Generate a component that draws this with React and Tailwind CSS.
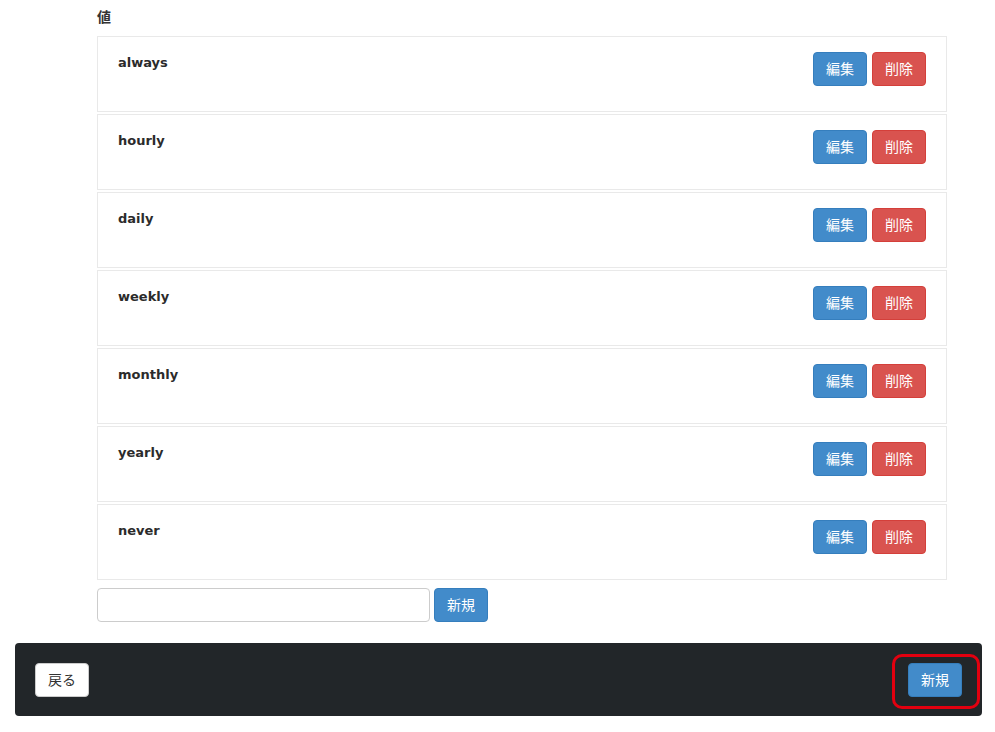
import React from "react";

const items = ["always", "hourly", "daily", "weekly", "monthly", "yearly", "never"];

const jp = { fontFamily: '"Noto Sans CJK JP", "Noto Sans", sans-serif' };

function Btn({ color, children }) {
  const cls =
    color === "blue"
      ? "bg-[#428bca] border-[#357ebd] text-white"
      : color === "red"
      ? "bg-[#d9534f] border-[#d43f3a] text-white"
      : "bg-white border-[#cccccc] text-[#333333]";
  return (
    <button
      style={jp}
      className={`h-[34px] w-[54px] rounded-[4px] border text-[14px] leading-none pb-[2px] flex items-center justify-center ${cls}`}
    >
      {children}
    </button>
  );
}

export default function App() {
  return (
    <div className="min-h-[732px] bg-white pt-[6px]" style={jp}>
      <div className="ml-[97px] w-[850px]">
        <div className="text-[14px] leading-[20px] font-bold text-[#333333] mb-[10px]">値</div>
        <div className="flex flex-col gap-[2px]">
          {items.map((it) => (
            <div
              key={it}
              className="h-[76px] border border-[#e9e9e9] px-[20px] pt-[15px] flex justify-between items-start"
            >
              <div
                className="mt-[3px] text-[13px] leading-[16px] font-bold text-[#2b2b2b]"
                style={{ fontFamily: '"DejaVu Sans", sans-serif' }}
              >
                {it}
              </div>
              <div className="flex gap-[5px]">
                <Btn color="blue">編集</Btn>
                <Btn color="red">削除</Btn>
              </div>
            </div>
          ))}
        </div>
        <div className="mt-[8px] flex gap-[4px]">
          <input
            type="text"
            className="w-[333px] h-[34px] rounded-[4px] border border-[#cccccc] bg-white px-3 outline-none"
          />
          <Btn color="blue">新規</Btn>
        </div>
      </div>
      <div className="ml-[15px] mt-[21px] w-[967px] h-[73px] rounded-[4px] bg-[#222629] px-[20px] flex items-center justify-between">
        <Btn color="white">戻る</Btn>
        <div className="relative">
          <Btn color="blue">新規</Btn>
          <div className="absolute -left-[16px] -right-[18px] -top-[9px] -bottom-[12px] border-[3px] border-[#e3000f] rounded-[10px] pointer-events-none" />
        </div>
      </div>
    </div>
  );
}
